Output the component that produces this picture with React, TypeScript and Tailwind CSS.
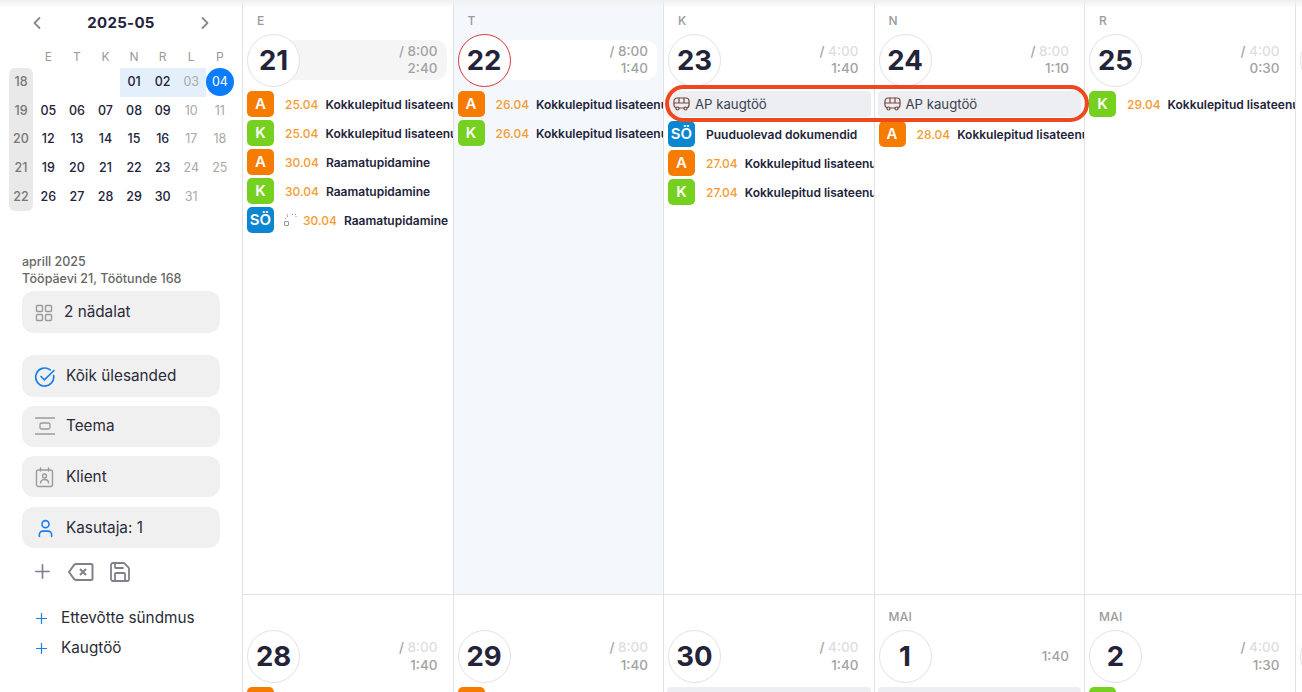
import type { ReactNode } from 'react'
import { ChevronLeft, ChevronRight, Plus, Save, User } from 'lucide-react'

type Task = { who: 'A' | 'K' | 'SÖ'; date?: string; title: string; dotted?: boolean }

type Day = {
  label?: string
  num: number
  plan?: string
  done: string
  box?: string
  today?: boolean
  dimPlan?: boolean
  event?: boolean
  tasks?: Task[]
}

const badgeColor = {
  A: 'bg-[#f57c00]',
  K: 'bg-[#76d01f]',
  'SÖ': 'bg-[#0b86d1]',
}

const lisa = 'Kokkulepitud lisateenus'
const raamat = 'Raamatupidamine'

const week1: Day[] = [
  {
    label: 'E', num: 21, plan: '8:00', done: '2:40', box: 'bg-[#f5f5f5]',
    tasks: [
      { who: 'A', date: '25.04', title: lisa },
      { who: 'K', date: '25.04', title: lisa },
      { who: 'A', date: '30.04', title: raamat },
      { who: 'K', date: '30.04', title: raamat },
      { who: 'SÖ', date: '30.04', title: raamat, dotted: true },
    ],
  },
  {
    label: 'T', num: 22, plan: '8:00', done: '1:40', box: 'bg-white', today: true,
    tasks: [
      { who: 'A', date: '26.04', title: lisa },
      { who: 'K', date: '26.04', title: lisa },
    ],
  },
  {
    label: 'K', num: 23, plan: '4:00', done: '1:40', dimPlan: true, event: true,
    tasks: [
      { who: 'SÖ', title: 'Puuduolevad dokumendid' },
      { who: 'A', date: '27.04', title: lisa },
      { who: 'K', date: '27.04', title: lisa },
    ],
  },
  {
    label: 'N', num: 24, plan: '8:00', done: '1:10', dimPlan: true, event: true,
    tasks: [{ who: 'A', date: '28.04', title: lisa }],
  },
  {
    label: 'R', num: 25, plan: '4:00', done: '0:30', dimPlan: true,
    tasks: [{ who: 'K', date: '29.04', title: lisa }],
  },
  { label: 'L', num: 26, done: '' },
]

const week2: Day[] = [
  { num: 28, plan: '8:00', done: '1:40', dimPlan: true, tasks: [{ who: 'A', date: '02.05', title: lisa }] },
  { num: 29, plan: '8:00', done: '1:40', dimPlan: true, tasks: [{ who: 'A', date: '03.05', title: lisa }] },
  { num: 30, plan: '4:00', done: '1:40', dimPlan: true, event: true },
  { label: 'MAI', num: 1, done: '1:40', event: true },
  { label: 'MAI', num: 2, plan: '4:00', done: '1:30', dimPlan: true, tasks: [{ who: 'K', date: '06.05', title: lisa }] },
  { num: 3, done: '' },
]

const calRows = [
  { week: 18, days: ['', '', '', '01', '02', '03', '04'] },
  { week: 19, days: ['05', '06', '07', '08', '09', '10', '11'] },
  { week: 20, days: ['12', '13', '14', '15', '16', '17', '18'] },
  { week: 21, days: ['19', '20', '21', '22', '23', '24', '25'] },
  { week: 22, days: ['26', '27', '28', '29', '30', '31', ''] },
]

function MiniCalendar() {
  return (
    <div className="pl-[9px]">
      <div className="flex items-center h-[26px] mt-[10px] pl-[18px] pr-[27px] justify-between">
        <ChevronLeft size={20} strokeWidth={2.2} className="text-[#8a8a8a]" />
        <span className="text-[15px] font-bold text-[#23233a] tracking-[0.3px]">2025-05</span>
        <ChevronRight size={20} strokeWidth={2.2} className="text-[#8a8a8a]" />
      </div>
      <div className="flex mt-[9px]">
        <div className="w-[24px] mt-[23px] rounded-md bg-[#e9e9e9] text-[#777] text-[12.5px] font-medium">
          {calRows.map(r => (
            <div key={r.week} className="h-[28.7px] flex items-center justify-center">{r.week}</div>
          ))}
        </div>
        <div className="ml-[1px]">
          <div className="flex h-[23px] items-center">
            {['E', 'T', 'K', 'N', 'R', 'L', 'P'].map(d => (
              <div key={d} className="w-[28.6px] text-center text-[12px] text-[#999]">{d}</div>
            ))}
          </div>
          {calRows.map(r => (
            <div key={r.week} className="flex h-[28.7px]">
              {r.days.map((d, i) => {
                const inRange = r.week === 18 && i >= 3
                const sel = d === '04' && r.week === 18
                return (
                  <div
                    key={i}
                    className={`w-[28.6px] flex items-center justify-center text-[12.5px] font-medium ${inRange && !sel ? 'bg-[#e3f0fb]' : ''} ${i >= 5 ? 'text-[#a8a8a8] font-normal' : 'text-[#23233a]'}`}
                  >
                    {sel ? (
                      <span className="w-[28px] h-[28px] rounded-full bg-[#0a7cff] text-white flex items-center justify-center">{d}</span>
                    ) : d}
                  </div>
                )
              })}
            </div>
          ))}
        </div>
      </div>
    </div>
  )
}

function FilterBtn({ icon, text, className }: { icon: ReactNode; text: string; className: string }) {
  return (
    <div className={`h-[41px] rounded-xl bg-[#f0f0f1] flex items-center pl-[13px] text-[15.3px] text-[#2b2b38] ${className}`}>
      <span className="flex-none">{icon}</span>
      {text}
    </div>
  )
}

function Sidebar() {
  return (
    <aside className="w-[243px] flex-none border-r border-[#e3e3e6] h-full">
      <MiniCalendar />
      <div className="px-[22px] mt-[42px]">
        <div className="text-[12.5px] font-medium text-[#666] leading-[17px]">aprill 2025</div>
        <div className="text-[12.5px] font-medium text-[#666] leading-[17px]">Tööpäevi 21, Töötunde 168</div>
        <FilterBtn
          className="mt-[4px] h-[42px] pt-[1px]"
          text="2 nädalat"
          icon={
            <svg width="18" height="18" viewBox="0 0 18 18" fill="none" stroke="#9a9a9a" strokeWidth="1.4" className="w-[29px]" preserveAspectRatio="xMinYMid meet">
              <rect x="1.5" y="1.5" width="6" height="6" rx="1" />
              <rect x="10.5" y="1.5" width="6" height="6" rx="1" />
              <rect x="1.5" y="10.5" width="6" height="6" rx="1" />
              <rect x="10.5" y="10.5" width="6" height="6" rx="1" />
            </svg>
          }
        />
        <FilterBtn
          className="mt-[22px] h-[42px] pt-[1px]"
          text="Kõik ülesanded"
          icon={
            <svg width="22" height="22" viewBox="0 0 22 22" fill="none" stroke="#1a7fe8" strokeWidth="1.7" strokeLinecap="round" className="-ml-[1px] mr-[10px]">
              <path d="M19.6 9.5a9 9 0 1 1-3.4-5.6" />
              <path d="M7 10.5l3.4 3.4L20 4.5" />
            </svg>
          }
        />
        <FilterBtn
          className="mt-[9px] pb-[1px]"
          text="Teema"
          icon={
            <svg width="22" height="18" viewBox="0 0 22 18" fill="none" stroke="#9a9a9a" strokeWidth="1.3" className="-ml-[1px] mr-[10px]">
              <path d="M1 1h20M1 17h20" />
              <rect x="6" y="6" width="10" height="6" rx="1.5" />
            </svg>
          }
        />
        <FilterBtn
          className="mt-[9px] pt-[1px]"
          text="Klient"
          icon={
            <svg width="20" height="21" viewBox="0 0 20 21" fill="none" stroke="#9a9a9a" strokeWidth="1.4" strokeLinecap="round" className="mr-[11px]">
              <rect x="1.5" y="3" width="16" height="16.5" rx="2" />
              <path d="M5.5 1v3M13.5 1v3" />
              <circle cx="9.5" cy="9" r="2" />
              <path d="M5.5 16c0-2.2 1.8-3.5 4-3.5s4 1.3 4 3.5" />
            </svg>
          }
        />
        <FilterBtn
          className="mt-[10px] pt-[1px]"
          text="Kasutaja: 1"
          icon={<User size={21} strokeWidth={1.8} className="text-[#1a7fe8] mr-[10px]" />}
        />
        <div className="flex items-center mt-[11px] h-[25px] text-[#80808c]">
          <Plus size={23} strokeWidth={1.7} className="ml-[9px]" />
          <svg width="26" height="20" viewBox="0 0 26 20" fill="none" stroke="currentColor" strokeWidth="2" strokeLinejoin="round" className="ml-[14px]">
            <path d="M8 2h15a1.5 1.5 0 0 1 1.5 1.5v13A1.5 1.5 0 0 1 23 18H8c-1 0-1.5-.5-2-1l-5-7 5-7c.5-.5 1-1 2-1z" />
            <path d="M12 7l6 6M18 7l-6 6" />
          </svg>
          <Save size={24} strokeWidth={1.8} className="ml-[14px]" />
        </div>
        <div className="mt-[24px] flex items-center h-[20px] text-[15.3px] text-[#2b2b38]">
          <Plus size={17} strokeWidth={1.7} className="text-[#1a7fe8] ml-[11px] mr-[11px]" />
          Ettevõtte sündmus
        </div>
        <div className="mt-[10px] flex items-center h-[20px] text-[15.3px] text-[#2b2b38]">
          <Plus size={17} strokeWidth={1.7} className="text-[#1a7fe8] ml-[11px] mr-[11px]" />
          Kaugtöö
        </div>
      </div>
    </aside>
  )
}

function TaskRow({ task }: { task: Task }) {
  return (
    <div className="flex items-center h-[26px] mb-[3px] whitespace-nowrap overflow-hidden">
      <div className={`w-[27px] h-[26px] flex-none rounded-[5px] flex items-center justify-center text-white text-[15px] font-semibold ${badgeColor[task.who]}`}>
        {task.who}
      </div>
      {task.dotted && (
        <svg width="14" height="14" viewBox="0 0 14 14" fill="none" stroke="#999" strokeWidth="1" className="ml-[9px] flex-none">
          <path d="M2 6l3-3M5 2H3M9 1.5h1M12 1.5h1M13 3v1" strokeDasharray="1.5 1" />
          <rect x="1.5" y="8.5" width="4" height="4" rx=".5" />
        </svg>
      )}
      {task.date ? (
        <span className={`pt-[2px] text-[12px] font-medium text-[#f59b2f] ${task.dotted ? 'ml-[6px]' : 'ml-[11px]'}`}>{task.date}</span>
      ) : null}
      <span className={`pt-[2px] text-[12px] font-semibold text-[#23233a] ${task.date ? 'ml-[7px]' : 'ml-[11px]'}`}>{task.title}</span>
    </div>
  )
}

function BusIcon() {
  return (
    <svg width="17" height="14" viewBox="0 0 17 14" fill="none" stroke="#7a4a3e" strokeWidth="1.2" strokeLinecap="round" className="mr-[5px] flex-none">
      <rect x="1" y="1" width="15" height="10" rx="3" />
      <path d="M1 6h15M6 1v5M11 1v5" />
      <circle cx="4.5" cy="11.5" r="1.5" fill="#eceef1" />
      <circle cx="12.5" cy="11.5" r="1.5" fill="#eceef1" />
    </svg>
  )
}

function DayCell({ day, top }: { day: Day; top: boolean }) {
  return (
    <div className={`w-[210.5px] flex-none border-r border-[#e0e2e6] overflow-hidden pl-[4px] ${top ? 'pt-[10px]' : 'pt-[11px]'} ${day.today ? 'bg-[#f4f8fd]' : ''}`}>
      <div className="h-[21px] pl-[10px] mb-[3px] text-[12px] font-medium text-[#9a9a9a] leading-[21px] tracking-[0.3px]">{day.label}</div>
      <div className="flex items-center h-[53px]">
        <div className={`relative z-10 w-[53px] h-[53px] flex-none rounded-full bg-white border flex items-center justify-center text-[27.5px] font-bold text-[#23233a] ${day.today ? 'border-[#d8343a]' : 'border-[#e2e2e2]'}`}>
          {day.num}
        </div>
        <div className={`flex-1 h-[40px] -ml-[26px] mr-[6px] mb-[2px] pr-[9px] rounded-xl flex flex-col items-end justify-center font-medium text-[13.5px] ${top ? 'leading-[17px]' : 'leading-[18px]'} ${day.box ?? ''}`}>
          {day.plan && (
            <div className="text-[#a3a3a3]">
              / <span className={day.dimPlan ? 'text-[#dedede]' : ''}>{day.plan}</span>
            </div>
          )}
          <div className="text-[#a3a3a3]">{day.done}</div>
        </div>
      </div>
      <div className="mt-[4px]">
        {day.event && (
          <div className="h-[26px] mt-[1px] -ml-[1px] mr-[3px] mb-[4px] rounded-[4px] bg-[#eceef1] flex items-center pl-[6px] text-[13.2px] text-[#3a3f4f]">
            <BusIcon />
            <span className="pt-[1px]">AP kaugtöö</span>
          </div>
        )}
        {day.tasks?.map((t, i) => <TaskRow key={i} task={t} />)}
      </div>
    </div>
  )
}

export default function App() {
  return (
    <div className="relative w-[1302px] h-[692px] flex overflow-hidden bg-white font-[Inter,sans-serif]">
      <div className="absolute inset-x-0 top-0 h-[8px] z-20 bg-gradient-to-b from-[#f0f0f0] to-transparent" />
      <Sidebar />
      <div className="flex flex-col flex-none">
        <div className="flex h-[595px] flex-none border-b border-[#e0e2e6]">
          {week1.map(d => <DayCell key={d.num} day={d} top />)}
        </div>
        <div className="flex flex-1">
          {week2.map(d => <DayCell key={d.num} day={d} top={false} />)}
        </div>
      </div>
      <div className="absolute left-[665px] top-[85px] w-[424px] h-[37px] z-30 rounded-full border-[4px] border-[#f0481e]" />
    </div>
  )
}
